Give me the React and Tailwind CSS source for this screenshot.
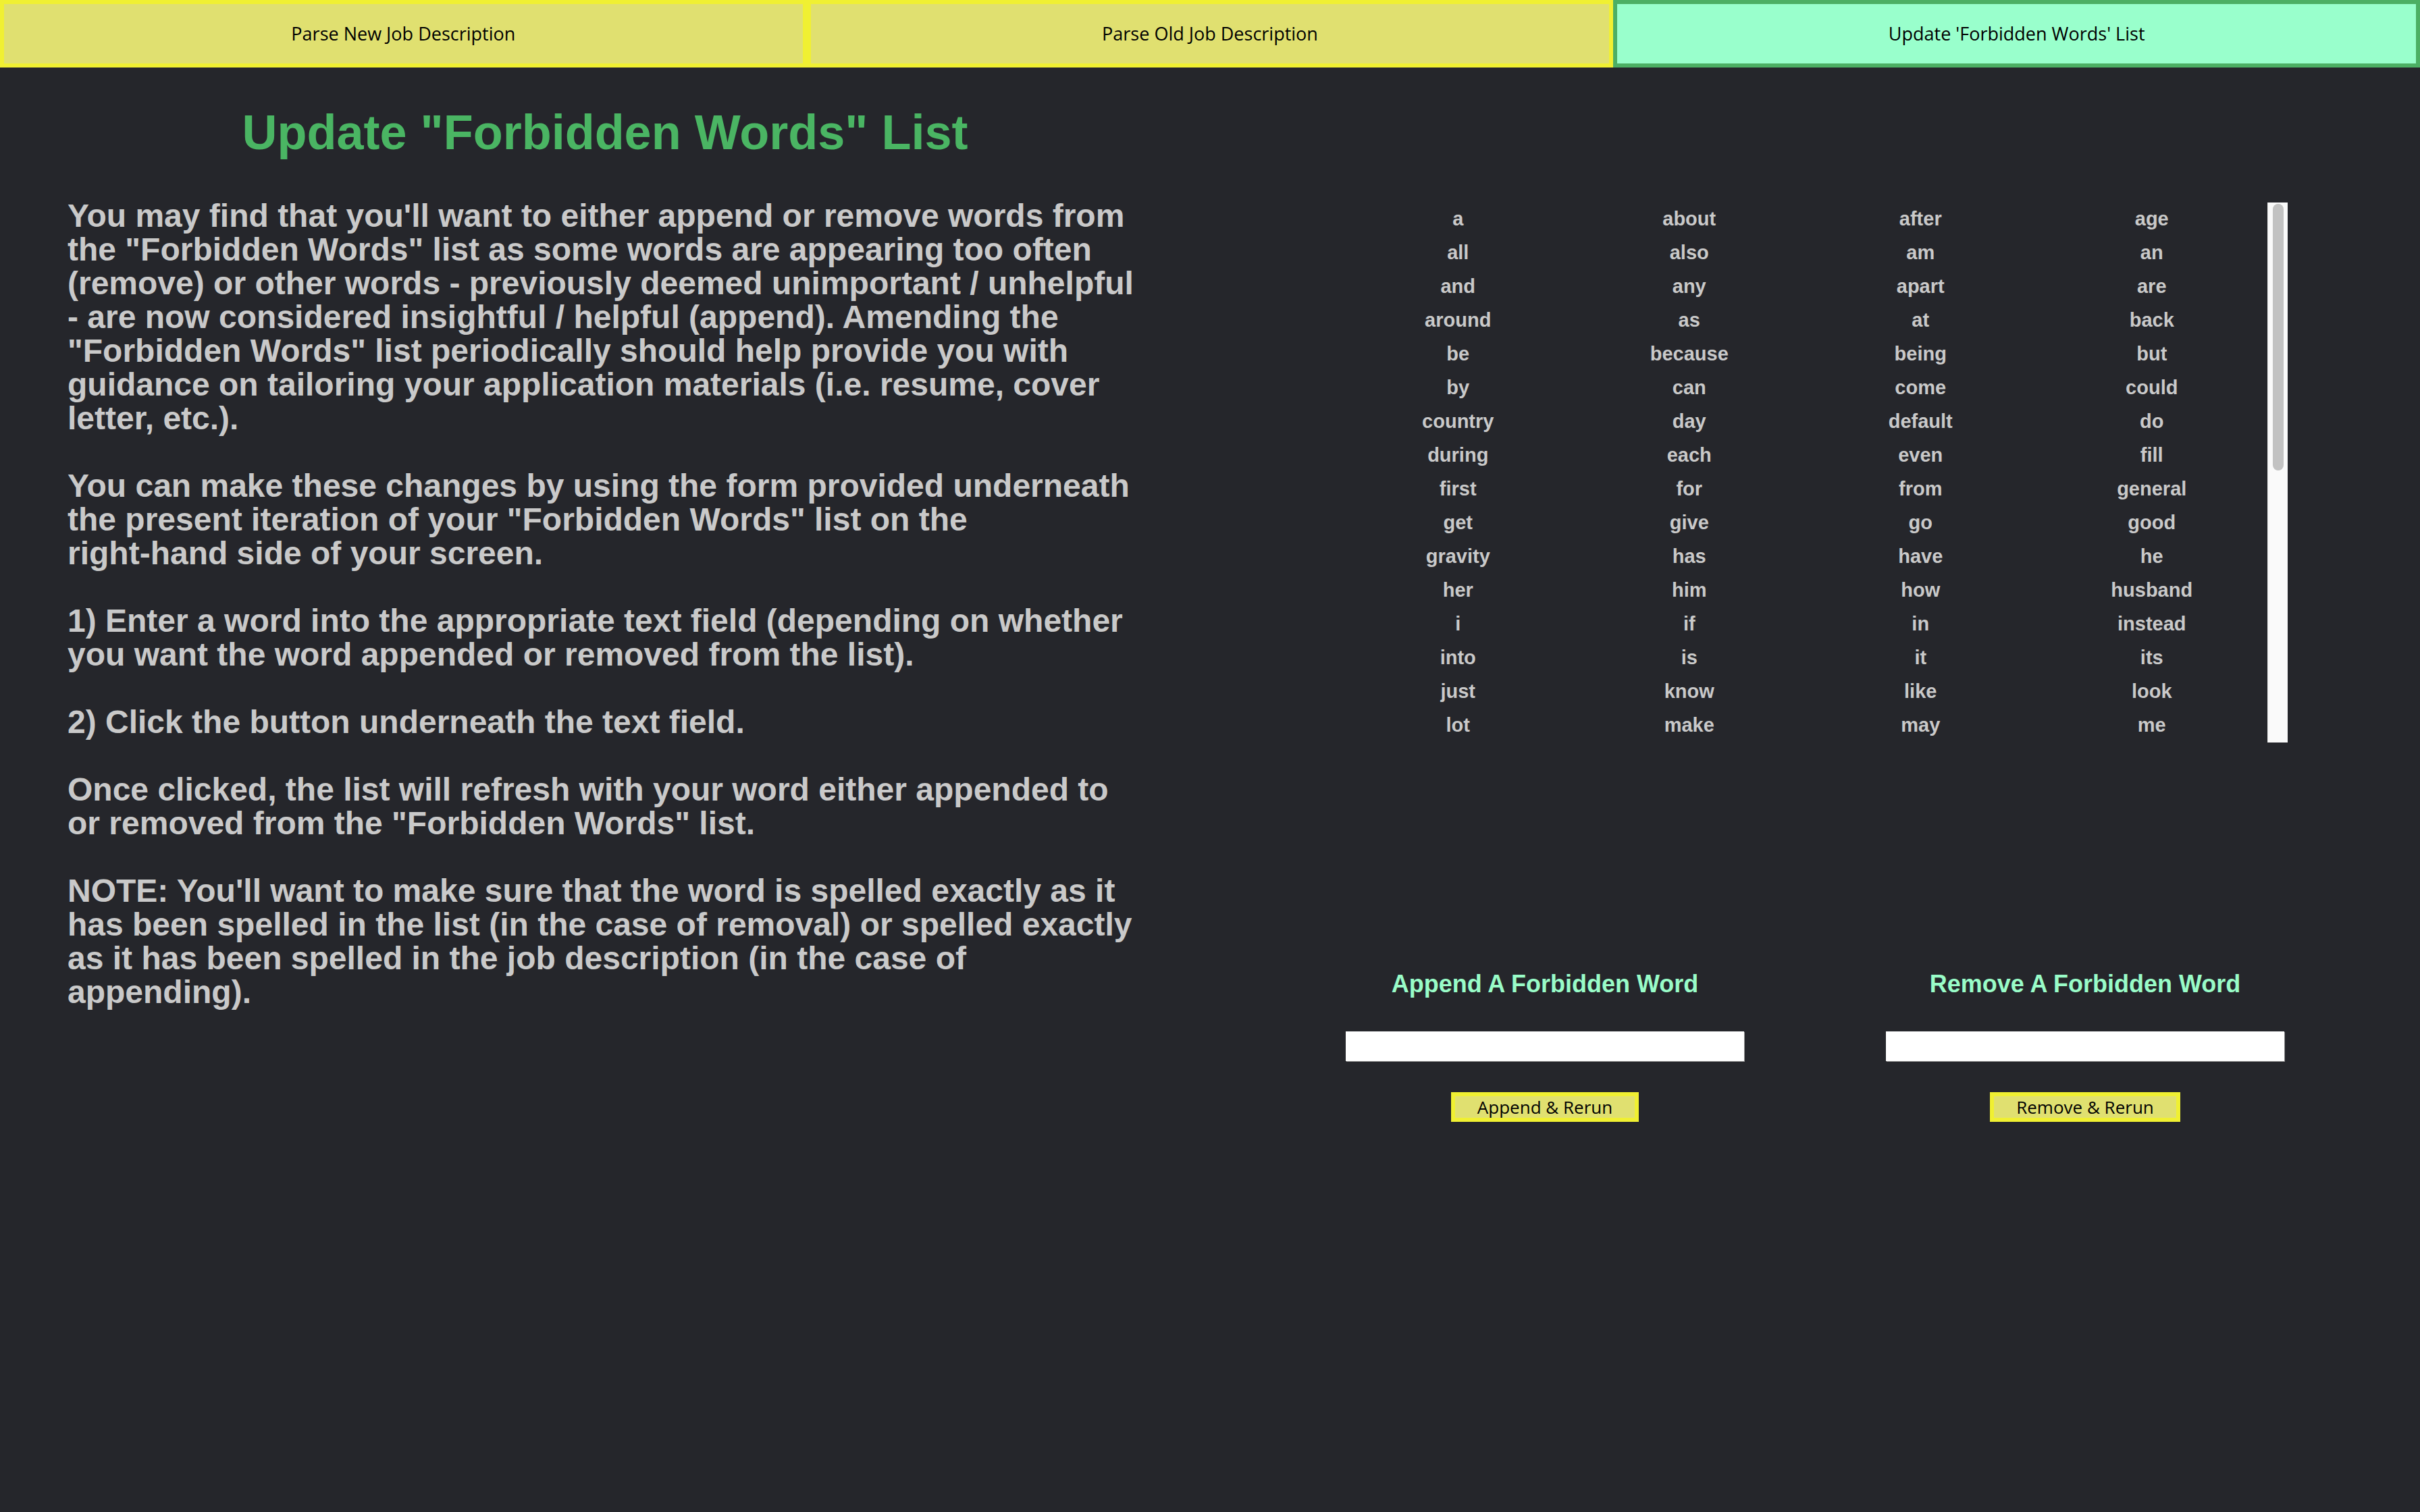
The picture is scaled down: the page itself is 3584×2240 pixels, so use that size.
import { useState } from 'react';

const words = [
  'a', 'about', 'after', 'age', 'all', 'also', 'am', 'an', 'and', 'any', 'apart', 'are',
  'around', 'as', 'at', 'back', 'be', 'because', 'being', 'but', 'by', 'can', 'come', 'could',
  'country', 'day', 'default', 'do', 'during', 'each', 'even', 'fill', 'first', 'for', 'from', 'general',
  'get', 'give', 'go', 'good', 'gravity', 'has', 'have', 'he', 'her', 'him', 'how', 'husband',
  'i', 'if', 'in', 'instead', 'into', 'is', 'it', 'its', 'just', 'know', 'like', 'look',
  'lot', 'make', 'may', 'me', 'more', 'most', 'much', 'my', 'new', 'no', 'not', 'now',
  'of', 'off', 'on', 'one', 'only', 'or', 'other', 'our', 'out', 'over', 'people', 'please',
  'same', 'say', 'see', 'she', 'should', 'so', 'some', 'such', 'take', 'than', 'that', 'the',
  'their', 'them', 'then', 'there', 'these', 'they', 'thing', 'think', 'this', 'those', 'time', 'to',
  'too', 'two', 'up', 'us', 'use', 'very', 'want', 'was', 'way', 'we', 'well', 'were',
  'what', 'when', 'where', 'which', 'who', 'will', 'with', 'work', 'would', 'year', 'you', 'your',
];

const tabs = ['Parse New Job Description', 'Parse Old Job Description', "Update 'Forbidden Words' List"];

function WordForm({ title, label }) {
  const [value, setValue] = useState('');
  return (
    <div className="flex w-[600px] flex-col items-center">
      <h3 className="text-[36px] font-bold leading-[41px] text-[#99fcc8]">{title}</h3>
      <input
        type="text"
        value={value}
        onChange={(e) => setValue(e.target.value)}
        className="mt-[50px] h-[44px] w-[590px] bg-white px-2 text-[24px] text-black shadow-[1px_1px_0_#8a8a8a] outline-none"
      />
      <button
        type="button"
        className="mt-[46px] h-[44px] border-[6px] border-[#f0f032] bg-[#e0e070] px-[33px] font-['Open_Sans',sans-serif] text-[26px] leading-none text-black"
      >
        {label}
      </button>
    </div>
  );
}

export default function App() {
  const [active, setActive] = useState(2);

  return (
    <div className="min-h-[2240px] bg-[#25262b] font-['Liberation_Sans',Arial,sans-serif]">
      {/* top tabs */}
      <nav className="flex">
        {tabs.map((t, i) => (
          <button
            key={t}
            type="button"
            onClick={() => setActive(i)}
            className={
              i === active
                ? "h-[100px] flex-1 border-[6px] border-[#4caf64] bg-[#99ffcc] font-['Open_Sans',sans-serif] text-[27px] text-black"
                : "h-[100px] flex-1 border-[6px] border-[#f0f032] bg-[#e0e070] font-['Open_Sans',sans-serif] text-[27px] text-black"
            }
          >
            {t}
          </button>
        ))}
      </nav>

      <main className="grid grid-cols-2">
        {/* left column: explanation */}
        <section className="px-[100px]">
          <h1 className="mt-[55px] text-center text-[72px] font-bold leading-[83px] text-[#4ab563]">
            Update "Forbidden Words" List
          </h1>
          <p className="mt-[57px] text-[48px] font-bold leading-[50px] text-[#c9c9c9]">
            You may find that you'll want to either append or remove words from the "Forbidden Words" list as
            some words are appearing too often (remove) or other words - previously deemed unimportant / unhelpful
            - are now considered insightful / helpful (append). Amending the "Forbidden Words" list periodically
            should help provide you with guidance on tailoring your application materials (i.e. resume, cover
            letter, etc.).
            <br />
            <br />
            You can make these changes by using the form provided underneath the present iteration of your
            "Forbidden Words" list on the
            <br />
            right-hand side of your screen.
            <br />
            <br />
            1) Enter a word into the appropriate text field (depending on whether you want the word appended or
            removed from the list).
            <br />
            <br />
            2) Click the button underneath the text field.
            <br />
            <br />
            Once clicked, the list will refresh with your word either appended to or removed from the "Forbidden
            Words" list.
            <br />
            <br />
            NOTE: You'll want to make sure that the word is spelled exactly as it has been spelled in the list (in
            the case of removal) or spelled exactly as it has been spelled in the job description (in the case of
            appending).
          </p>
        </section>

        {/* right column: list + forms */}
        <section className="flex flex-col items-center">
          <div className="mt-[200px] flex h-[800px] w-[1400px]">
            <div className="h-full flex-1 overflow-y-auto [scrollbar-width:none]">
              <div className="grid grid-cols-4">
                {words.map((w) => (
                  <div key={w} className="flex h-[50px] items-center justify-center text-[29px] font-bold text-[#c9c9c9]">
                    {w}
                  </div>
                ))}
              </div>
            </div>
            {/* scrollbar */}
            <div className="h-full w-[30px] border-l border-[#e4e4e4] bg-[#fafafa] pt-[2px] pr-[6px] pl-[7px]">
              <div className="h-[395px] rounded-full bg-[#c2c2c2]" />
            </div>
          </div>

          <div className="mt-[337px] flex gap-[200px]">
            <WordForm title="Append A Forbidden Word" label="Append & Rerun" />
            <WordForm title="Remove A Forbidden Word" label="Remove & Rerun" />
          </div>
        </section>
      </main>
    </div>
  );
}
